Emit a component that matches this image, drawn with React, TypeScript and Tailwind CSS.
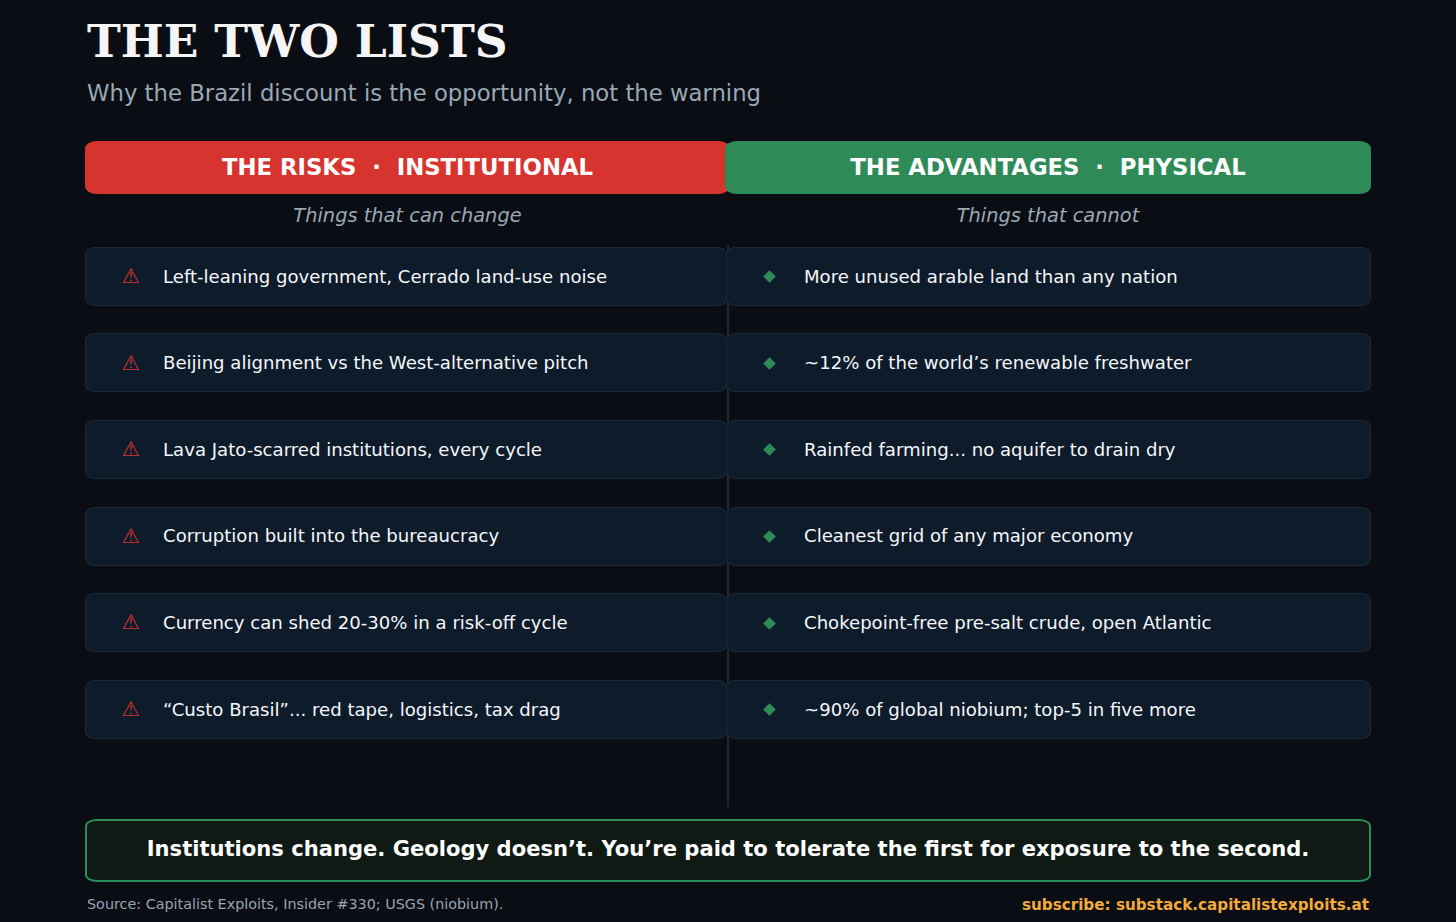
const risks = [
  "Left-leaning government, Cerrado land-use noise",
  "Beijing alignment vs the West-alternative pitch",
  "Lava Jato-scarred institutions, every cycle",
  "Corruption built into the bureaucracy",
  "Currency can shed 20-30% in a risk-off cycle",
  "“Custo Brasil”... red tape, logistics, tax drag",
];

const advantages = [
  "More unused arable land than any nation",
  "~12% of the world’s renewable freshwater",
  "Rainfed farming... no aquifer to drain dry",
  "Cleanest grid of any major economy",
  "Chokepoint-free pre-salt crude, open Atlantic",
  "~90% of global niobium; top-5 in five more",
];

function Row({ text, kind }: { text: string; kind: "risk" | "advantage" }) {
  return (
    <div className="flex h-[59px] items-center rounded-[10px/7px] border border-[#1c2a38] bg-[#0e1b2a]">
      {kind === "risk" ? (
        <span className="flex w-[77px] shrink-0 justify-end pr-[23px] text-[20.5px] leading-none text-[#d8342f]">⚠</span>
      ) : (
        <span className="flex w-[77px] shrink-0 justify-end pr-[30px]">
          <span className="mt-[1px] h-[9px] w-[9px] rotate-45 bg-[#2e8b57]" />
        </span>
      )}
      <span className="text-[18.1px] text-[#f5f7fa]">{text}</span>
    </div>
  );
}

export default function App() {
  return (
    <div className="h-[922px] overflow-hidden bg-[#0a0d14] px-[85px] font-['DejaVu_Sans',sans-serif]">
      <h1 className="pt-[15px] pl-[2px] font-['DejaVu_Serif',serif] text-[45.5px] leading-[52px] font-bold text-[#f5f5f5]">
        THE TWO LISTS
      </h1>
      <p className="mt-[12px] pl-[2px] text-[22.75px] leading-[28px] text-[#9aa8b5]">
        Why the Brazil discount is the opportunity, not the warning
      </p>

      <div className="relative mt-[34px]">
        <div className="absolute top-[104px] left-[642px] h-[562px] w-[2px] bg-[#1c2a38]" />
        <div className="relative flex">
          <div className="w-[645px] flex-none">
            <div className="flex h-[53px] items-center justify-center rounded-[12px/8px] bg-[#d8342f] pb-[1px] text-[22.75px] font-bold whitespace-pre text-white">
              THE RISKS  ·  INSTITUTIONAL
            </div>
            <p className="mt-[10px] text-center text-[19.4px] leading-[24px] text-[#9aa8b5] italic">Things that can change</p>
            <div className="mt-[18.75px] mr-[3px] flex flex-col gap-[27.6px]">
              {risks.map((text) => (
                <Row key={text} text={text} kind="risk" />
              ))}
            </div>
          </div>
          <div className="relative -ml-[5px] w-[646px] flex-none">
            <div className="flex h-[53px] items-center justify-center rounded-[12px/8px] bg-[#2e8b57] pb-[1px] text-[22.75px] font-bold whitespace-pre text-white">
              THE ADVANTAGES  ·  PHYSICAL
            </div>
            <p className="mt-[10px] text-center text-[19.4px] leading-[24px] text-[#9aa8b5] italic">Things that cannot</p>
            <div className="mt-[18.75px] ml-[1px] flex flex-col gap-[27.6px]">
              {advantages.map((text) => (
                <Row key={text} text={text} kind="advantage" />
              ))}
            </div>
          </div>
        </div>
      </div>

      <div className="mt-[80.25px] flex h-[63px] items-center justify-center rounded-[12px/7px] border-2 border-[#2e8b57] bg-[#101a14] pb-[3px] text-[21.08px] font-bold text-white">
        Institutions change. Geology doesn’t. You’re paid to tolerate the first for exposure to the second.
      </div>

      <div className="mt-[13px] flex items-center justify-between px-[2px] text-[14.35px] leading-[18px]">
        <span className="text-[#98a4b2]">Source: Capitalist Exploits, Insider #330; USGS (niobium).</span>
        <span className="mt-[1px] text-[15.2px] font-bold text-[#f2aa3a]">subscribe: substack.capitalistexploits.at</span>
      </div>
    </div>
  );
}
